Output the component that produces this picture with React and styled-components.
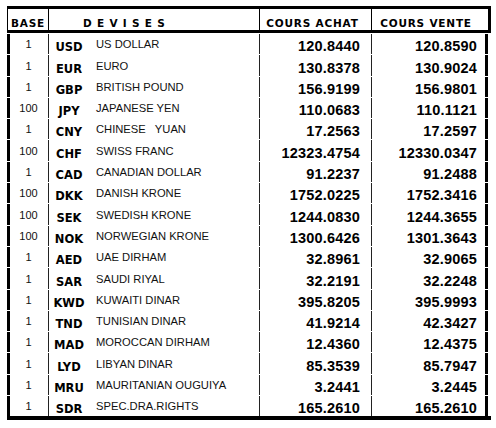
import React from "react";
import styled, { createGlobalStyle } from "styled-components";

const rates = [
  ["1", "USD", "US DOLLAR", "120.8440", "120.8590"],
  ["1", "EUR", "EURO", "130.8378", "130.9024"],
  ["1", "GBP", "BRITISH POUND", "156.9199", "156.9801"],
  ["100", "JPY", "JAPANESE YEN", "110.0683", "110.1121"],
  ["1", "CNY", "CHINESE   YUAN", "17.2563", "17.2597"],
  ["100", "CHF", "SWISS FRANC", "12323.4754", "12330.0347"],
  ["1", "CAD", "CANADIAN DOLLAR", "91.2237", "91.2488"],
  ["100", "DKK", "DANISH KRONE", "1752.0225", "1752.3416"],
  ["100", "SEK", "SWEDISH KRONE", "1244.0830", "1244.3655"],
  ["100", "NOK", "NORWEGIAN KRONE", "1300.6426", "1301.3643"],
  ["1", "AED", "UAE DIRHAM", "32.8961", "32.9065"],
  ["1", "SAR", "SAUDI RIYAL", "32.2191", "32.2248"],
  ["1", "KWD", "KUWAITI DINAR", "395.8205", "395.9993"],
  ["1", "TND", "TUNISIAN DINAR", "41.9214", "42.3427"],
  ["1", "MAD", "MOROCCAN DIRHAM", "12.4360", "12.4375"],
  ["1", "LYD", "LIBYAN DINAR", "85.3539", "85.7947"],
  ["1", "MRU", "MAURITANIAN OUGUIYA", "3.2441", "3.2445"],
  ["1", "SDR", "SPEC.DRA.RIGHTS", "165.2610", "165.2610"],
];

const App = () => {
  return (
    <>
      <Global />
      <Table>
        <HeadRow>
          <HeadCell $w="40px" $align="center">BASE</HeadCell>
          <HeadCell $w="211px" $pad="0 0 0 34px">D E V I S E S</HeadCell>
          <HeadCell $w="112px" $align="center" $pad="0 6px 0 0">COURS ACHAT</HeadCell>
          <HeadCell $w="117px" $align="center" $pad="0 8px 0 0">COURS VENTE</HeadCell>
        </HeadRow>
        <Body>
          {rates.map(([base, code, name, buy, sell]) => (
            <React.Fragment key={code}>
              <BaseCell>{base}</BaseCell>
              <DevCell>
                <Code>{code}</Code>
                <Name>{name}</Name>
              </DevCell>
              <NumCell $pr="11px">{buy}</NumCell>
              <NumCell $pr="8px" $last>{sell}</NumCell>
            </React.Fragment>
          ))}
        </Body>
      </Table>
    </>
  );
};

export default App;

const Global = createGlobalStyle`
body {
  margin: 0;
  background: #fff;
  color: #000;
  font-family: "Liberation Sans", Arial, sans-serif;
}
`;

const Table = styled.div`
width: 484px;
margin: 6px 0 0 7px;
border-top: 3px solid #000;
border-bottom: 4px solid #000;
`;

const HeadRow = styled.div`
display: flex;
height: 21px;
border-bottom: 3px solid #000;
border-left: 1px solid #000;
border-right: 3px solid #000;
`;

const HeadCell = styled.div`
width: ${(p) => p.$w};
box-sizing: border-box;
display: flex;
align-items: flex-end;
justify-content: ${(p) => (p.$align === "center" ? "center" : "flex-start")};
padding: ${(p) => p.$pad || "0"};
padding-bottom: 1px;
font-family: "DejaVu Sans", sans-serif;
font-weight: bold;
font-size: 10.5px;
letter-spacing: 0.8px;
white-space: pre;
& + & {
  border-left: 1px solid #000;
}
&:first-child {
  width: 40px;
}
`;

const Body = styled.div`
display: grid;
grid-template-columns: 41px 211px 112px 117px;
grid-auto-rows: 20.3px;
row-gap: 1px;
padding-top: 1px;
`;

const BaseCell = styled.div`
border-left: 3px solid #000;
display: flex;
align-items: flex-end;
justify-content: center;
padding: 0 1px 4px 0;
font-size: 11px;
line-height: 11px;
color: #111;
`;

const DevCell = styled.div`
border-left: 1px solid #222;
display: flex;
align-items: flex-end;
padding-bottom: 1px;
`;

const Code = styled.span`
width: 40px;
text-align: center;
font-family: "DejaVu Sans", sans-serif;
font-weight: bold;
font-size: 11.5px;
line-height: 12px;
`;

const Name = styled.span`
padding-left: 7px;
padding-bottom: 3px;
font-size: 11.2px;
line-height: 11px;
white-space: pre;
color: #111;
`;

const NumCell = styled.div`
border-left: 1px solid #222;
border-right: ${(p) => (p.$last ? "3px solid #000" : "none")};
display: flex;
align-items: flex-end;
justify-content: flex-end;
padding: 0 ${(p) => p.$pr} 1px 0;
font-weight: bold;
font-size: 14.5px;
line-height: 14px;
letter-spacing: 0.2px;
`;
